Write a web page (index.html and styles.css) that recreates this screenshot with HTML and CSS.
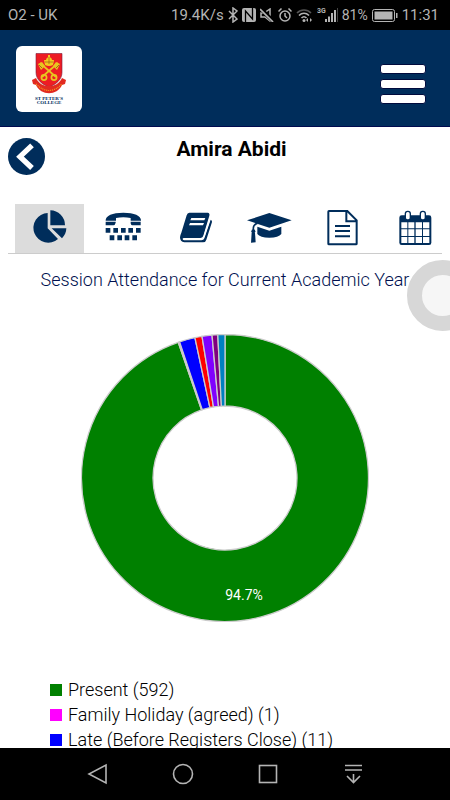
FILE: index.html
```html
<!DOCTYPE html>
<html lang="en">
<head>
    <meta charset="UTF-8">
    <meta name="viewport" content="width=device-width, initial-scale=1.0">
    <title>Session Attendance</title>
    <link rel="stylesheet" href="styles.css">
</head>
<body>
    <div class="status-bar">
        <span class="carrier">O2 - UK</span>
        <span>19.4K/s</span>
        <svg class="icon-bt" viewBox="0 0 10 16" width="10" height="16"><path d="M1 4l8 8-4 3V1l4 3-8 8" fill="none" stroke="#b4b4b4" stroke-width="1.5"/></svg>
        <svg class="icon-nfc" viewBox="0 0 14 14" width="14" height="14"><path d="M0 2q0-2 2-2h10q2 0 2 2v10q0 2-2 2H2q-2 0-2-2z" fill="#b4b4b4"/><path d="M3.500 14V3l7 8V0" fill="none" stroke="#000" stroke-width="1.300"/></svg>
        <svg class="icon-mute" viewBox="0 0 14 14" width="14" height="14"><path d="M1 5h3l6-4v12l-5-4H1z" fill="none" stroke="#b4b4b4" stroke-width="1.5"/><path d="M0 0l14 14" stroke="#000" stroke-width="4"/><path d="M0 1l13 13" stroke="#b4b4b4" stroke-width="1.7"/></svg>
        <svg class="icon-alarm" viewBox="0 0 14 14" width="14" height="14"><g fill="none" stroke="#b4b4b4" stroke-width="1.5"><circle cx="7" cy="8" r="5"/><path d="M7 5v3l2 2M.5 3.500l3-3M13.500 3.500l-3-3"/></g></svg>
        <svg class="icon-wifi" viewBox="0 0 17 14" width="17" height="14"><g fill="none" stroke="#b4b4b4" stroke-width="1.6"><path d="M1 5c4-4 10-4 14 0" stroke="#555"/><path d="M3 7.500c3-3 7-3 10 0M5.500 10c1.500-1.500 3.500-1.500 5 0"/></g><circle cx="8" cy="12.500" r="1.500" fill="#b4b4b4"/><path d="M10 12l2-2v4zM16 12l-2-2v4z" fill="#b4b4b4"/></svg>
        <svg class="icon-signal" viewBox="0 0 21 16" width="21" height="16"><text class="network" x="0" y="6">3G</text><path d="M8 12h2v3H8zM11 9.500h2V15h-2zM14 6h2v9h-2zM17 3h2v12h-2z" fill="#b4b4b4"/><path d="M20 1h1v14h-1z" fill="#444"/></svg>
        <span class="percent">81%</span>
        <svg class="icon-battery" viewBox="0 0 26 13" width="26" height="13"><rect x=".5" y=".5" width="22" height="12" rx="2" fill="none" stroke="#b4b4b4"/><path d="M2.500 2.500h18v8h-18zM24 4h1.500v5H24z" fill="#b4b4b4"/></svg>
        <span class="clock">11:31</span>
    </div>

    <header class="header">
        <a class="logo" href="#" aria-label="St Peter's College">
            <svg viewBox="0 0 66 66" width="66" height="66">
                <path d="M20 7.500h26v19c0 7-6 12-13 14.500-7-2.500-13-7.500-13-14.500z" fill="#ed1c24" stroke="#7a1c3c" stroke-width=".6"/>
                <g fill="none" stroke="#e8c520" stroke-width="1.700">
                    <path d="M24 17l16 14M42 17L26 31"/>
                    <circle cx="28" cy="31.500" r="2.600"/>
                    <circle cx="38" cy="31.500" r="2.600"/>
                </g>
                <path d="M22 18l4-2 3 4-4 4zM44 18l-4-2-3 4 4 4z" fill="#e8c520"/>
                <path d="M23 19l3 3M43 19l-3 3" stroke="#8d4a16" stroke-width=".8"/>
                <path d="M29 19l-1-5 2 0c0-2 2-3 3-3s3 1 3 3l2 0-1 5q-4 2-8 0zM32 9h2v3h-2z" fill="#f2c81e"/>
                <path d="M29 16h8M33 11v7" stroke="#8d4a16" stroke-width=".6"/>
                <path d="M16 34l4-2c5 11 21 11 26 0l4 2-1 4-3 1c-5 11-21 11-26 0l-3-1z" fill="#e22a20"/>
                <path d="M20 38q13 13 26 0" fill="none" stroke="#f4a21e" stroke-width="1.200" stroke-dasharray="1 1"/>
                <text class="logo-text" x="33" y="53.500">ST PETER'S</text>
                <text class="logo-text" x="33" y="58">COLLEGE</text>
            </svg>
        </a>
        <button class="menu-button" type="button" aria-label="Menu">
            <span class="bar"></span>
            <span class="bar"></span>
            <span class="bar"></span>
        </button>
    </header>

    <main class="content">
        <div class="student">
            <a class="back" href="#" aria-label="Back">
                <svg viewBox="0 0 111 111" width="37" height="37"><circle cx="55.500" cy="55.500" r="55.500" fill="#002d5b"/><path d="M72 22L36 56l36 34" fill="none" stroke="#fff" stroke-width="16"/></svg>
            </a>
            <h1 class="student-name">Amira Abidi</h1>
        </div>

        <nav class="tabs">
            <ul class="tab-list">
                <li><a class="tab active" href="#" aria-label="Attendance">
                    <svg viewBox="68 248 162 126" width="54" height="42"><path d="M142 263v46l31 32a44.500 44.500 0 1 1-31-78z"/><path d="M150 255a45 45 0 0 1 44 45h-44zM154 309h44c0 12-5 22-13 30z"/></svg>
                </a></li>
                <li><a class="tab" href="#" aria-label="Contacts">
                    <svg viewBox="287 248 162 126" width="54" height="42"><path d="M316 285c0-14 20-23 53-23s53 9 53 23v1h-31v-8q-22-5-44 0v8h-31zM316 289h30v3q-2 8-7 8h-23zM391 289h30v11h-23q-7 0-7-8zM316 308h14v14h-14zM339 308h14v14h-14zM362 308h14v14h-14zM384 308h14v14h-14zM407 308h14v14h-14zM328 330h14v15h-14zM351 330h14v15h-14zM373 330h14v15h-14zM396 330h14v15h-14z"/></svg>
                </a></li>
                <li><a class="tab" href="#" aria-label="Homework">
                    <svg viewBox="506 248 162 126" width="54" height="42"><path d="M567 262h55q7 1 5 9l-18 60q-2 7-9 7h-49q-5 0-4 4 1 3 5 3h51q7 0 9-6l19-56q5 2 4 7l-17 53q-2 8-10 8h-56q-13-1-13-15 1-8 4-14l16-52q2-7 8-8z"/><path d="M573 278h42l-3 7h-42zM569 293h42l-3 7h-42z" fill="#fff"/><path d="M630 275l-19 59q-2 6-9 6" fill="none" stroke="#fff" stroke-width="4"/></svg>
                </a></li>
                <li><a class="tab" href="#" aria-label="Assessments">
                    <svg viewBox="50 248 162 126" width="54" height="42"><path d="M65 285l67-22 67 22-67 22zM96 304l36 12 36-12v22q-8 11-36 11t-36-11z"/><path d="M96 294q-11 3-12 14v20" fill="none" stroke="#002d5b" stroke-width="5"/><circle cx="84" cy="318" r="6"/><path d="M79 322h10l2 29-14 1z"/></svg>
                </a></li>
                <li><a class="tab" href="#" aria-label="Reports">
                    <svg viewBox="269 248 162 126" width="54" height="42"><path d="M311 257h55l28 28v70q0 2-2 2h-81q-2 0-2-2v-96q0-2 2-2zM363 257v31h31" fill="none" stroke="#002d5b" stroke-width="6"/><path d="M329 299h45v6h-45zM329 314h45v6h-45zM329 330h45v6h-45z"/></svg>
                </a></li>
                <li><a class="tab" href="#" aria-label="Calendar">
                    <svg viewBox="488 248 162 126" width="54" height="42"><path d="M529 270h82q7 0 7 7v75q0 7-7 7h-82q-7 0-7-7v-75q0-7 7-7z"/><path d="M528 291h18v18h-18zM549 291h18v18h-18zM571 291h19v18h-19zM593 291h19v18h-19zM528 312h18v20h-18zM549 312h18v20h-18zM571 312h19v20h-19zM593 312h19v20h-19zM528 335h18v18h-18zM549 335h18v18h-18zM571 335h19v18h-19zM593 335h19v18h-19z" fill="#fff"/><g fill="#fff" stroke="#002d5b" stroke-width="4"><rect x="540" y="258" width="15" height="26" rx="7"/><rect x="585" y="258" width="15" height="26" rx="7"/></g></svg>
                </a></li>
            </ul>
        </nav>

        <h2 class="chart-title">Session Attendance for Current Academic Year</h2>
        <svg class="chart" id="chart" viewBox="-144 -144 288 288" width="288" height="288" role="img" aria-label="Session attendance"></svg>

        <ul class="legend">
            <li><span class="swatch present"></span>Present (592)</li>
            <li><span class="swatch holiday"></span>Family Holiday (agreed) (1)</li>
            <li><span class="swatch late"></span>Late (Before Registers Close) (11)</li>
        </ul>
    </main>

    <div class="touch-dot"></div>

    <div class="nav-bar">
        <button type="button" aria-label="Back"><svg viewBox="0 0 24 24" width="24" height="24"><path d="M20 3v18L3 12z"/></svg></button>
        <button type="button" aria-label="Home"><svg viewBox="0 0 24 24" width="24" height="24"><circle cx="12" cy="12" r="9.500"/></svg></button>
        <button type="button" aria-label="Recent apps"><svg viewBox="0 0 24 24" width="24" height="24"><rect x="3.500" y="3.500" width="17" height="17"/></svg></button>
        <button type="button" aria-label="Notifications"><svg viewBox="0 0 24 24" width="24" height="24"><path d="M4 3.500h17M4 8h17M12.500 12v8M6 14l6.500 6.500L19 14"/></svg></button>
    </div>
    <script src="chart.js"></script>
</body>
</html>
```
FILE: styles.css
```css
* {
    box-sizing: border-box;
}
html {
    overflow: hidden;
}
body {
    margin: 0;
    height: 100vh;
    display: flex;
    flex-direction: column;
    overflow: hidden;
    position: relative;
    background-color: #fff;
    color: #000;
    font-family: Roboto, "Liberation Sans", sans-serif;
}
ul {
    list-style: none;
    margin: 0;
    padding: 0;
}
button {
    border: 0;
    padding: 0;
    background: none;
}
svg {
    display: block;
}

/* phone status bar */
.status-bar {
    flex: none;
    height: 30px;
    padding: 0 11px 0 8px;
    display: flex;
    align-items: center;
    gap: 4px;
    background-color: #000;
    color: #b4b4b4;
    font-size: 15px;
    line-height: 30px;
}
.status-bar svg {
    flex: none;
}
.carrier {
    margin-right: auto;
}
.percent {
    font-size: 14px;
}
.network {
    font-size: 7px;
    font-weight: bold;
    fill: #b4b4b4;
}

.header {
    flex: none;
    display: flex;
    justify-content: space-between;
    align-items: flex-start;
    padding: 16px 24px 14px 16px;
    background-color: #002d5b;
    border-bottom: 1px solid #000a4f;
}
.logo {
    background-color: #fff;
    border-radius: 6px;
}
.logo-text {
    font-family: "Liberation Serif", serif;
    font-size: 5px;
    font-weight: bold;
    text-anchor: middle;
    fill: #002d5b;
}
.menu-button {
    display: flex;
    flex-direction: column;
    gap: 5px;
    padding-top: 18px;
}
.bar {
    width: 46px;
    height: 10px;
    border: 1px solid #000a3c;
    border-radius: 3px;
    background-color: #fff;
}

.content {
    flex: 1;
    min-height: 0;
    overflow: hidden;
    padding: 11px 8px 0;
}
.student {
    display: flex;
    align-items: flex-start;
    margin-bottom: 29px;
}
.student-name {
    flex: 1;
    margin: 0;
    padding-right: 24px;
    font-size: 21px;
    line-height: 22px;
    text-align: center;
}
.tabs {
    border-bottom: 1px solid #ccc;
}
.tab-list {
    display: flex;
    gap: 4px;
    margin: 0 -7px 0 7px;
}
.tab-list li {
    flex: 1;
}
.tab {
    display: flex;
    align-items: center;
    justify-content: center;
    height: 49px;
    fill: #002d5b;
}
.tab.active {
    background-color: #dcdcdc;
}

.chart-title {
    margin: 15px 0 43px;
    color: #00104f;
    font-size: 18px;
    font-weight: 300;
    line-height: 22px;
    text-align: center;
}
.chart {
    margin: 0 auto;
}
.chart path {
    stroke: #ccc;
    stroke-width: 1.3px;
}
.chart text {
    font-size: 14px;
    fill: #fff;
    text-anchor: middle;
}
.legend {
    margin-top: 55px;
    padding-left: 42px;
    font-size: 18px;
    font-weight: 300;
    line-height: 25px;
}
.legend li {
    display: flex;
    align-items: center;
    gap: 6px;
}
.swatch {
    width: 12px;
    height: 12px;
}
.present {
    background-color: #008000;
}
.holiday {
    background-color: #f0f;
}
.late {
    background-color: #00f;
}

/* floating assistive button, half off the right edge */
.touch-dot {
    position: absolute;
    top: 260px;
    right: -28px;
    width: 71px;
    height: 71px;
    border: 15px solid #d7d7d7;
    border-radius: 50%;
    background-color: #f6f6f6;
}

.nav-bar {
    flex: none;
    height: 52px;
    padding: 0 55px;
    display: flex;
    background-color: #000;
}
.nav-bar button {
    flex: 1;
    display: flex;
    align-items: center;
    justify-content: center;
}
.nav-bar svg {
    fill: none;
    stroke: #b4b4b4;
    stroke-width: 1.6px;
}
```
FILE: chart.js
```js
var sessions = [
    { count: 592, color: '#008000' },
    { count: 1, color: '#ff00ff' },
    { count: 11, color: '#0000ff' },
    { count: 5, color: '#ff0000' },
    { count: 7, color: '#8000ff' },
    { count: 4, color: '#800080' },
    { count: 5, color: '#0080c0' }
];
var outer = 143.5;
var inner = 72;
var ns = 'http://www.w3.org/2000/svg';

function point(radius, angle) {
    return (radius * Math.sin(angle)).toFixed(2) + ' ' + (-radius * Math.cos(angle)).toFixed(2);
}

function drawChart() {
    var chart = document.getElementById('chart');
    var total = 0;
    for (var i = 0; i < sessions.length; i++) {
        total += sessions[i].count;
    }
    var start = 0;
    for (var i = 0; i < sessions.length; i++) {
        var end = start + sessions[i].count / total * Math.PI * 2;
        var large = end - start > Math.PI ? 1 : 0;
        var slice = document.createElementNS(ns, 'path');
        slice.setAttribute('d', 'M' + point(outer, start) +
            'A' + outer + ' ' + outer + ' 0 ' + large + ' 1 ' + point(outer, end) +
            'L' + point(inner, end) +
            'A' + inner + ' ' + inner + ' 0 ' + large + ' 0 ' + point(inner, start) + 'Z');
        slice.setAttribute('fill', sessions[i].color);
        chart.appendChild(slice);
        start = end;
    }
    // only the biggest slice has room for a label
    var label = document.createElementNS(ns, 'text');
    label.setAttribute('x', 19);
    label.setAttribute('y', 122);
    label.textContent = (Math.round(sessions[0].count / total * 1000) / 10) + '%';
    chart.appendChild(label);
}

drawChart();
```
